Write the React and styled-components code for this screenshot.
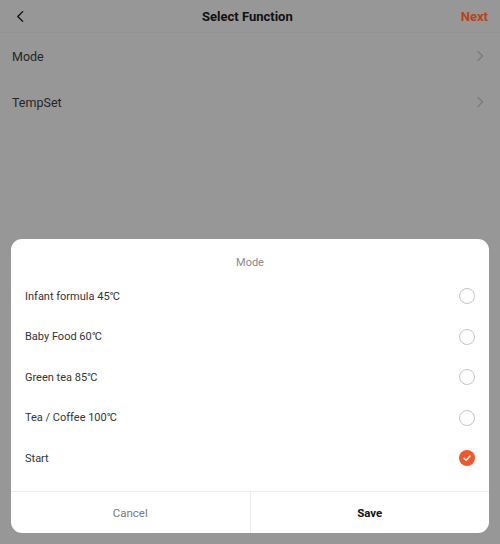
import styled, { createGlobalStyle } from "styled-components";

const Global = createGlobalStyle`
  html, body { margin: 0; padding: 0; }
  body {
    font-family: Roboto, "Noto Sans", Arial, sans-serif;
    background: #979797;
  }
`;

const Page = styled.div`
  position: relative;
  width: 500px;
  height: 544px;
  background: #979797;
  overflow: hidden;
`;

const Header = styled.div`
  height: 33px;
  display: flex;
  align-items: center;
  justify-content: space-between;
  padding: 0 12px 0 14px;
  border-bottom: 1px solid #929292;
  box-sizing: border-box;
`;

const Back = styled.div`
  width: 20px;
  display: flex;
  align-items: center;
`;

const Title = styled.div`
  font-size: 13px;
  font-weight: 700;
  color: #111;
`;

const Next = styled.div`
  font-size: 13px;
  font-weight: 700;
  color: #b9421c;
`;

const Row = styled.div`
  height: 46px;
  display: flex;
  align-items: center;
  justify-content: space-between;
  padding: 0 14px 0 12px;
  font-size: 12.5px;
  color: #262626;
`;

const Sheet = styled.div`
  position: absolute;
  left: 11px;
  right: 11px;
  bottom: 11px;
  height: 294px;
  background: #fff;
  border-radius: 11px;
  display: flex;
  flex-direction: column;
  overflow: hidden;
`;

const SheetTitle = styled.div`
  height: 37px;
  display: flex;
  align-items: center;
  justify-content: center;
  padding-top: 9px;
  box-sizing: border-box;
  font-size: 11px;
  color: #8a8a8a;
`;

const Options = styled.div`
  flex: 1;
  display: flex;
  flex-direction: column;
`;

const Option = styled.div`
  height: 40.5px;
  display: flex;
  align-items: center;
  justify-content: space-between;
  padding: 0 14px 0 14px;
  font-size: 11px;
  color: #333;
`;

const Deg = styled.span`
  letter-spacing: -1px;
`;

const Radio = styled.div`
  width: 16px;
  height: 16px;
  box-sizing: border-box;
  border-radius: 50%;
  border: ${(p) => (p.checked ? "none" : "1px solid #c6c6c6")};
  background: ${(p) => (p.checked ? "#f2572b" : "transparent")};
  display: flex;
  align-items: center;
  justify-content: center;
`;

const Footer = styled.div`
  height: 41px;
  display: flex;
  border-top: 1px solid #ececec;
`;

const FooterButton = styled.div`
  flex: 1;
  display: flex;
  align-items: center;
  justify-content: center;
  font-size: 11.5px;
  font-weight: ${(p) => (p.primary ? 700 : 400)};
  color: ${(p) => (p.primary ? "#111" : "#7a7a7a")};
  & + & {
    border-left: 1px solid #ececec;
  }
`;

const Chevron = ({ dir = "right", color = "#7c7c7c", size = 12 }) => (
  <svg width={size} height={size} viewBox="0 0 12 12" fill="none">
    <path
      d={dir === "left" ? "M8 1.5L3.5 6L8 10.5" : "M4 1.5L8.5 6L4 10.5"}
      stroke={color}
      strokeWidth="1.3"
      strokeLinecap="round"
      strokeLinejoin="round"
    />
  </svg>
);

const options = [
  { label: "Infant formula 45", deg: true },
  { label: "Baby Food 60", deg: true },
  { label: "Green tea 85", deg: true },
  { label: "Tea / Coffee 100", deg: true },
  { label: "Start", checked: true },
];

const App = () => {
  return (
    <Page>
      <Global />
      <Header>
        <Back>
          <Chevron dir="left" color="#111" size={13} />
        </Back>
        <Title>Select Function</Title>
        <Next>Next</Next>
      </Header>
      <Row>
        Mode
        <Chevron />
      </Row>
      <Row>
        TempSet
        <Chevron />
      </Row>
      <Sheet>
        <SheetTitle>Mode</SheetTitle>
        <Options>
          {options.map((o) => (
            <Option key={o.label}>
              <span>
                {o.label}
                {o.deg && <Deg>°</Deg>}
                {o.deg && "C"}
              </span>
              <Radio checked={o.checked}>
                {o.checked && (
                  <svg width="10" height="10" viewBox="0 0 10 10" fill="none">
                    <path
                      d="M2 5.2L4.2 7.2L8 3"
                      stroke="#fff"
                      strokeWidth="1.5"
                      strokeLinecap="round"
                      strokeLinejoin="round"
                    />
                  </svg>
                )}
              </Radio>
            </Option>
          ))}
        </Options>
        <Footer>
          <FooterButton>Cancel</FooterButton>
          <FooterButton primary>Save</FooterButton>
        </Footer>
      </Sheet>
    </Page>
  );
};

export default App;
